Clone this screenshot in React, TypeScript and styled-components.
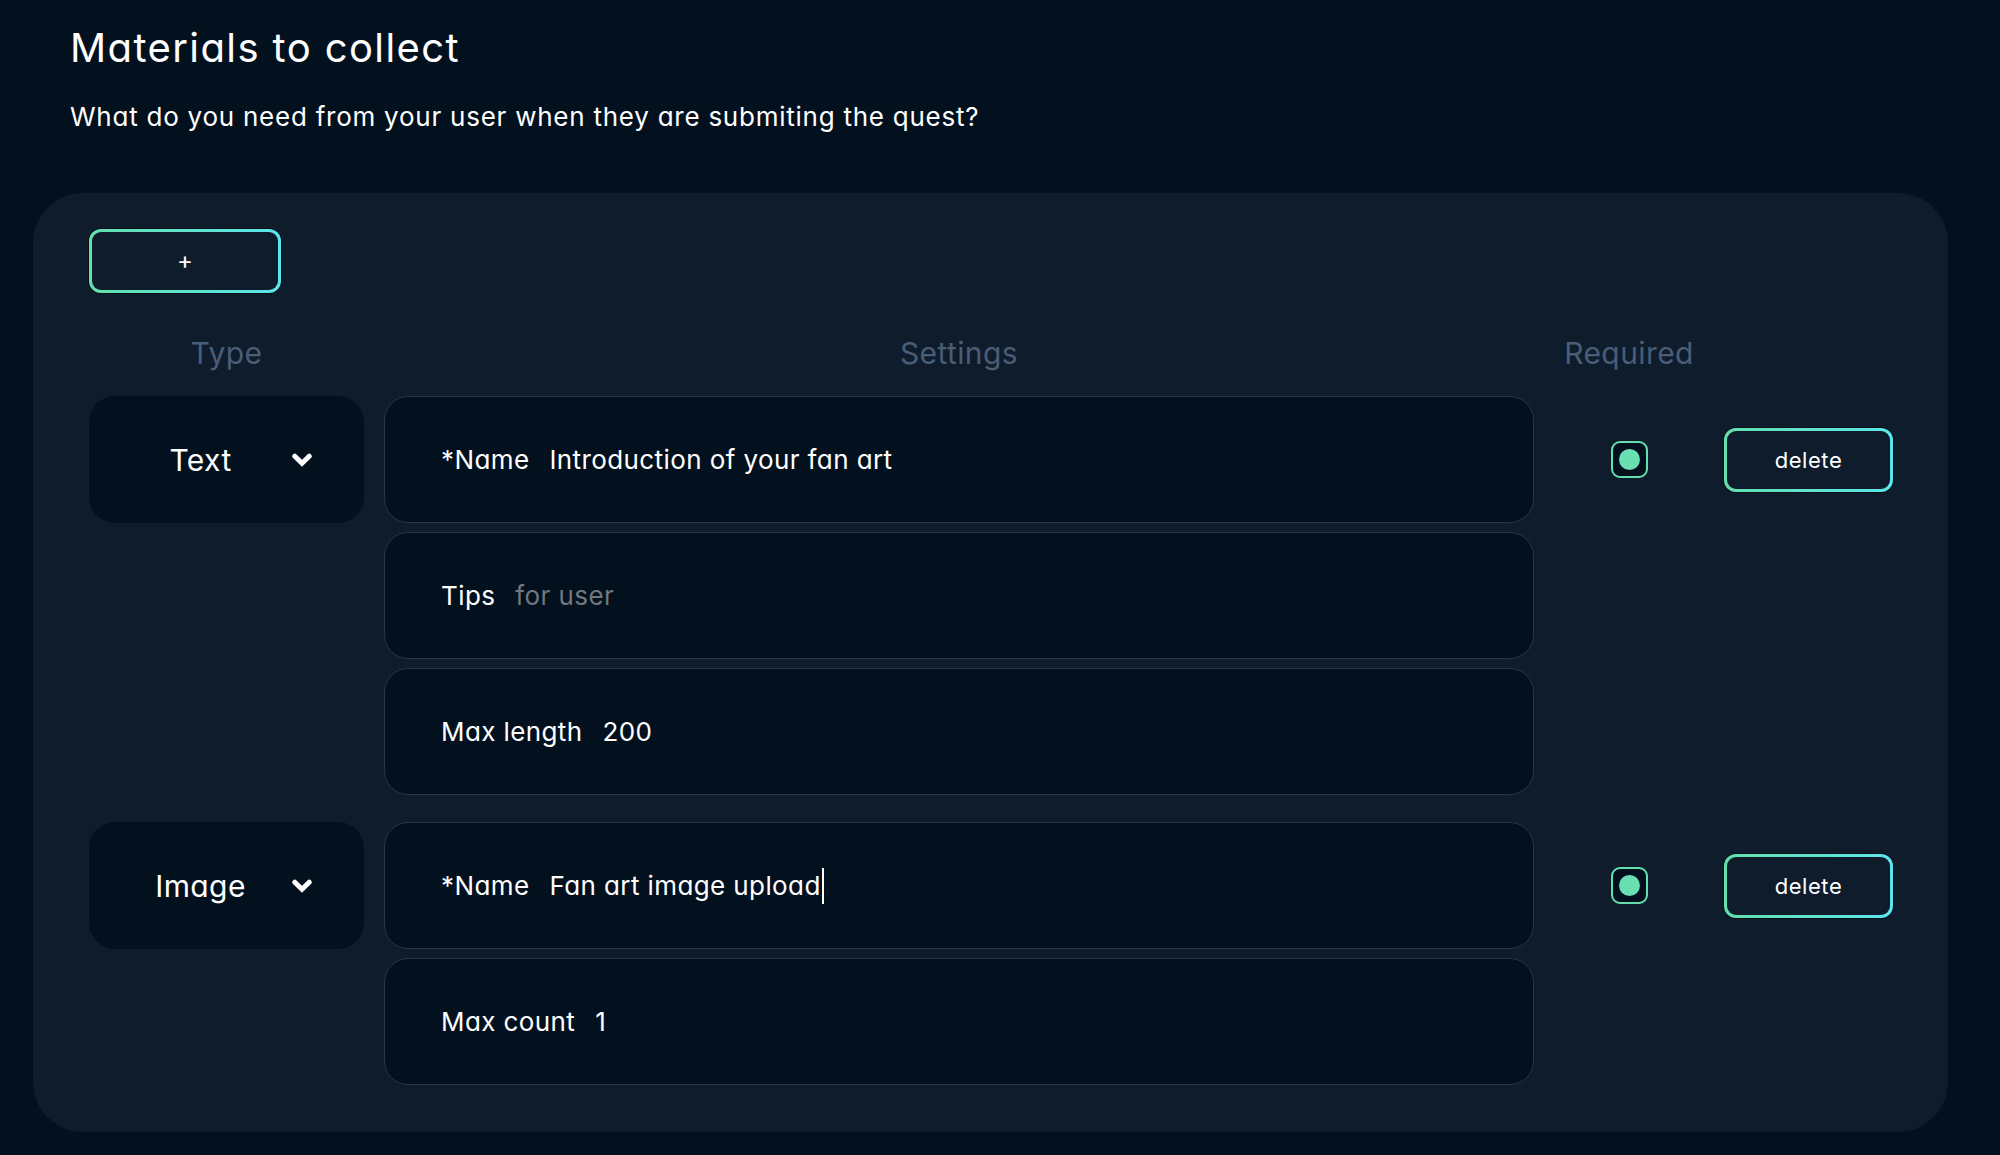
import styled, { createGlobalStyle } from "styled-components";

const GlobalStyle = createGlobalStyle`
  html, body {
    margin: 0;
    padding: 0;
    background: #03111f;
  }
  body {
    font-family: Inter, "Noto Sans", sans-serif;
    font-feature-settings: "cv11";
    letter-spacing: 0.025em;
    color: #ffffff;
  }
`;

type Field = { label: string; value: string; placeholder?: boolean; caret?: boolean };
type Material = { type: string; fields: Field[] };

const materials: Material[] = [
  {
    type: "Text",
    fields: [
      { label: "*Name", value: "Introduction of your fan art" },
      { label: "Tips", value: "for user", placeholder: true },
      { label: "Max length", value: "200" },
    ],
  },
  {
    type: "Image",
    fields: [
      { label: "*Name", value: "Fan art image upload", caret: true },
      { label: "Max count", value: "1" },
    ],
  },
];

const Chevron = () => (
  <svg width="20" height="14" viewBox="0 0 20 14" fill="none">
    <path
      d="M2.8 3.2 L10 10.2 L17.2 3.2"
      stroke="#ffffff"
      strokeWidth="5"
      strokeLinecap="round"
      strokeLinejoin="miter"
    />
  </svg>
);

export default function App() {
  return (
    <>
      <GlobalStyle />
      <Page>
        <Intro>
          <Title>Materials to collect</Title>
          <Subtitle>What do you need from your user when they are submiting the quest?</Subtitle>
        </Intro>

        <Panel>
          <AddButton>+</AddButton>

          <Grid>
            <HeaderCell>Type</HeaderCell>
            <HeaderCell>Settings</HeaderCell>
            <HeaderCell>Required</HeaderCell>
            <span />

            {materials.map((m) => (
              <Group key={m.type}>
                <TypeSelect>
                  <TypeLabel>{m.type}</TypeLabel>
                  <Chevron />
                </TypeSelect>

                <FieldStack>
                  {m.fields.map((f) => (
                    <FieldBox key={f.label}>
                      <FieldLabel>{f.label}</FieldLabel>
                      <FieldValue $placeholder={f.placeholder}>
                        {f.value}
                        {f.caret && <Caret />}
                      </FieldValue>
                    </FieldBox>
                  ))}
                </FieldStack>

                <RowCell>
                  <Checkbox>
                    <Dot />
                  </Checkbox>
                </RowCell>

                <RowCell>
                  <DeleteButton>delete</DeleteButton>
                </RowCell>
              </Group>
            ))}
          </Grid>
        </Panel>
      </Page>
    </>
  );
}

const Page = styled.div`
  padding: 24px 52px 23px 33px;
  min-height: 1155px;
  box-sizing: border-box;
`;

const Intro = styled.div`
  padding-left: 37px;
  display: flex;
  flex-direction: column;
  gap: 27px;
  margin-bottom: 58px;
`;

const Title = styled.h1`
  margin: 0;
  font-size: 40px;
  font-weight: 400;
  line-height: 48px;
  letter-spacing: 0.035em;
  color: #ffffff;
`;

const Subtitle = styled.p`
  margin: 0;
  font-size: 26px;
  font-weight: 400;
  line-height: 36px;
  letter-spacing: 0.029em;
  color: #ffffff;
`;

const Panel = styled.section`
  width: 1915px;
  box-sizing: border-box;
  background: #0e1c2c;
  border-radius: 50px;
  padding: 36px 55px 47px 56px;
`;

const gradientBorder = `
  border: 3px solid transparent;
  background:
    linear-gradient(#0e1c2c, #0e1c2c) padding-box,
    linear-gradient(90deg, #63e0ac, #5ce6ec) border-box;
  box-shadow: 0 0 0 1px #06111c;
`;

const AddButton = styled.button`
  ${gradientBorder}
  width: 192px;
  height: 64px;
  border-radius: 12px;
  color: #ffffff;
  font-family: Inter, sans-serif;
  font-size: 24px;
  line-height: 1;
  cursor: pointer;
`;

const Grid = styled.div`
  display: grid;
  grid-template-columns: 275px 1150px 150px 169px;
  column-gap: 20px;
  margin-top: 40px;
`;

const HeaderCell = styled.div`
  text-align: center;
  font-size: 30px;
  line-height: 40px;
  color: #4a5d76;
  padding-bottom: 23px;
`;

const Group = styled.div`
  display: grid;
  grid-column: 1 / -1;
  grid-template-columns: subgrid;
  align-items: start;

  & + & {
    margin-top: 27px;
  }
`;

const TypeSelect = styled.div`
  height: 127px;
  border-radius: 26px;
  background: #03111f;
  display: flex;
  align-items: center;
  gap: 20px;
  padding: 0 52px 0 40px;
  box-sizing: border-box;
  color: #ffffff;
`;

const TypeLabel = styled.span`
  flex: 1;
  text-align: center;
  font-size: 30px;
`;

const FieldStack = styled.div`
  display: flex;
  flex-direction: column;
  gap: 9px;
`;

const FieldBox = styled.div`
  height: 127px;
  box-sizing: border-box;
  border: 1.5px solid #25364b;
  border-radius: 24px;
  background: #03111f;
  display: flex;
  align-items: center;
  gap: 20px;
  padding: 0 56px;
  font-size: 26px;
`;

const FieldLabel = styled.span`
  color: #ffffff;
`;

const FieldValue = styled.span<{ $placeholder?: boolean }>`
  color: ${(p) => (p.$placeholder ? "#71777e" : "#ffffff")};
  display: flex;
  align-items: center;
`;

const Caret = styled.span`
  display: inline-block;
  width: 2px;
  height: 36px;
  background: #ffffff;
  margin-left: 1px;
`;

const RowCell = styled.div`
  height: 127px;
  display: flex;
  align-items: center;
  justify-content: center;
`;

const Checkbox = styled.div`
  width: 37px;
  height: 37px;
  box-sizing: border-box;
  border: 2px solid #62dfae;
  border-radius: 9px;
  background: #03111f;
  display: flex;
  align-items: center;
  justify-content: center;
`;

const Dot = styled.div`
  width: 21px;
  height: 21px;
  border-radius: 50%;
  background: #6ae0b2;
`;

const DeleteButton = styled.button`
  ${gradientBorder}
  width: 169px;
  height: 64px;
  border-radius: 12px;
  color: #ffffff;
  font-family: Inter, sans-serif;
  font-size: 22px;
  letter-spacing: 0.025em;
  cursor: pointer;
`;
